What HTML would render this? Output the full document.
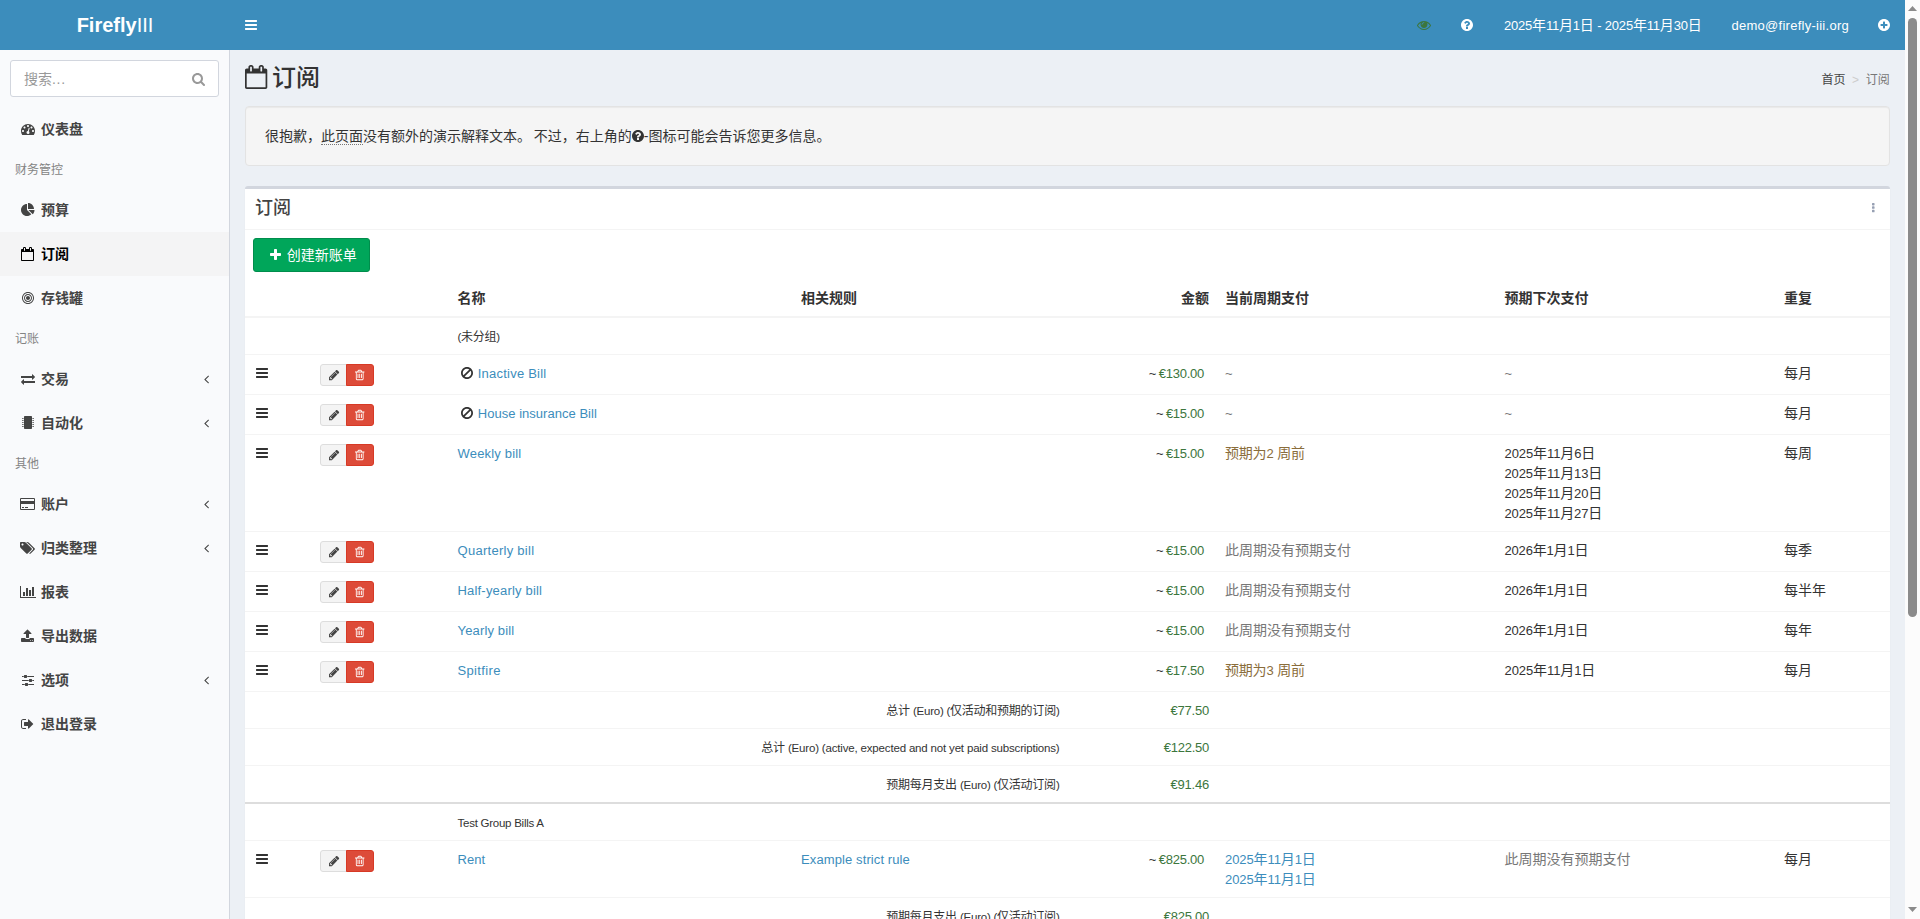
<!DOCTYPE html>
<html lang="zh-CN">
<head>
<meta charset="utf-8">
<title>订阅 » Firefly III</title>
<style>
*{box-sizing:border-box}
html,body{margin:0;padding:0}
body{width:1920px;height:919px;overflow:hidden;position:relative;background:#ecf0f5;
 font-family:"Liberation Sans","Noto Sans CJK SC",sans-serif;font-size:14px;line-height:20px;color:#333}
a{color:#3c8dbc;text-decoration:none}
.l{font-size:.93em;line-height:1}
svg.fa{display:inline-block;fill:currentColor;overflow:visible}
.fw{display:inline-block;text-align:center}
#page{position:absolute;left:0;top:0;width:1905px;height:919px;overflow:hidden;background:#ecf0f5}

/* header */
#hdr{position:absolute;left:0;top:0;width:1905px;height:50px;background:#3c8dbc;color:#fff}
#logo{position:absolute;left:0;top:0;width:230px;height:50px;line-height:50px;text-align:center;
 font-family:"Liberation Sans",sans-serif;font-size:20px;color:#fff;font-weight:300}
#logo b{font-weight:700}
#toggle{position:absolute;left:230px;top:0;padding:15px;height:50px;line-height:20px;color:#fff}
#nav{position:absolute;right:0;top:0;height:50px;margin:0;padding:0;list-style:none;display:flex}
#nav li{display:block;padding:15px;height:50px;line-height:20px;color:#fff;white-space:nowrap}

/* sidebar */
#side{position:absolute;left:0;top:50px;width:230px;height:869px;background:#f9fafc;border-right:1px solid #d2d6de}
#search{position:absolute;left:10px;top:10px;width:209px;height:37px;border:1px solid #d2d6de;border-radius:3px;background:#fff}
#search .ph{position:absolute;left:13px;top:8px;line-height:20px;color:#999}
#search .ic{position:absolute;right:13px;top:8px;color:#999;line-height:20px}
#menu{position:absolute;left:0;top:57px;width:229px;margin:0;padding:0;list-style:none}
#menu li{position:relative;display:block;margin:0}
#menu li.it{height:44px;padding:12px 5px 12px 15px;font-weight:600;color:#444;white-space:nowrap}
#menu li.it .ic{display:inline-block;width:20px;text-align:center;margin-left:2.7px}
#menu li.it{word-spacing:-.5px}
#menu li.act{background:#f4f4f5;color:#000}
#menu li.hd{height:37px;padding:11px 25px 9px 15px;font-size:12px;line-height:17px;color:#848484}
#menu .ar{position:absolute;right:20px;top:15px;line-height:14px;height:14px}

/* content */
#content{position:absolute;left:230px;top:50px;width:1675px;height:869px}
#h1{position:absolute;left:15px;top:15px;margin:0;font-size:24px;font-weight:500;line-height:26px;white-space:nowrap}
#bc{position:absolute;right:15.3px;top:22px;font-size:12px;line-height:17px;white-space:nowrap;color:#444}
#bc .sep{color:#ccc;display:inline-block;width:20.2px;text-align:center}
#bc .cur{color:#777}
#well{position:absolute;left:15px;top:56px;width:1645px;height:60px;background:#f5f5f5;border:1px solid #e3e3e3;border-radius:4px;
 box-shadow:inset 0 1px 1px rgba(0,0,0,.05);padding:19px;white-space:nowrap;word-spacing:-1.1px}
#well abbr{border-bottom:1px dotted #777;text-decoration:none}
#box{position:absolute;left:15px;top:136px;width:1645px;height:800px;background:#fff;border-top:3px solid #d2d6de;border-radius:3px;
 box-shadow:0 1px 1px rgba(0,0,0,.1)}
#boxh{height:41px;padding:10px;border-bottom:1px solid #f4f4f4;position:relative}
#boxh h3{margin:-1px 0 0;font-size:18px;font-weight:500;line-height:20px;color:#444}
#boxh .tool{position:absolute;right:15.4px;top:9.4px;color:#97a0b3;font-size:12px;line-height:20px}
#btn{position:absolute;left:8px;top:49px;height:34px;padding:6px 12px;border:1px solid #008d4c;border-radius:3px;background:#00a65a;color:#fff;white-space:nowrap}

table{position:absolute;left:0;top:91px;width:1645px;border-collapse:separate;border-spacing:0;table-layout:fixed}
th,td{padding:8px;vertical-align:top;text-align:left;line-height:20px;white-space:nowrap;overflow:visible}
th{font-weight:700;height:38px;border-bottom:2px solid #f4f4f4}
tr.r td{height:40px;border-top:1px solid #f4f4f4}
tr.t td{height:36px}
tr.s td{height:37px;border-top:1px solid #f4f4f4}
tr.sep td{border-top:2px solid #ddd;height:38px}
.ra{text-align:right}
small{font-size:12px;line-height:1}
small .l{font-size:.96em}
.am{margin-right:5px;word-spacing:-1.6px}
.g{color:#3c763d}
.w{color:#8a6d3b}
.m{color:#777}
.bg{display:inline-block;position:relative;top:1px;height:22px;vertical-align:top;white-space:nowrap;font-size:0}
.bx{display:inline-block;height:22px;font-size:12px;line-height:18px;padding:1px 5px;border:1px solid #ddd;background:#f4f4f4;color:#444;vertical-align:top}
.bx.e{border-radius:3px 0 0 3px;width:27px}
.bx.d{border-radius:0 3px 3px 0;background:#dd4b39;border-color:#d73925;color:#fff;margin-left:-1px;width:28px}

/* fake scrollbar */
#sb{position:absolute;left:1905px;top:0;width:15px;height:919px;background:#fcfcfc}
#sb .th{position:absolute;left:3px;top:18px;width:9px;height:599px;border-radius:5px;background:#8b8b8b}
#sb svg{position:absolute;left:0;width:15px;height:15px;fill:#8b8b8b}
.nm{word-spacing:-1.6px}
.nm a{word-spacing:0}
#h1{word-spacing:-1.97px}
#btn{word-spacing:-1.1px}
#nav li.sh{position:relative;left:1px}

</style>
</head>
<body>
<div id="page">

<div id="side">
  <div id="search"><span class="ph">搜索<span style="letter-spacing:.7px">...</span></span><span class="ic"><svg class="fa" viewBox="0 -1536 1664 1792" style="width:13.00px;height:14px;vertical-align:-2.00px;"><path transform="scale(1,-1)" d="M1152 704C1152 457 951 256 704 256C457 256 256 457 256 704C256 951 457 1152 704 1152C951 1152 1152 951 1152 704ZM1664 -128C1664 -94 1650 -61 1627 -38L1284 305C1365 422 1408 562 1408 704C1408 1093 1093 1408 704 1408C315 1408 0 1093 0 704C0 315 315 0 704 0C846 0 986 43 1103 124L1446 -218C1469 -242 1502 -256 1536 -256C1606 -256 1664 -198 1664 -128Z"/></svg></span></div>
  <ul id="menu">
    <li class="it"><span class="ic"><svg class="fa" viewBox="0 -1536 1792 1792" style="width:14.00px;height:14px;vertical-align:-2.00px;"><path transform="scale(1,-1)" d="M384 384C384 313 327 256 256 256C185 256 128 313 128 384C128 455 185 512 256 512C327 512 384 455 384 384ZM576 832C576 761 519 704 448 704C377 704 320 761 320 832C320 903 377 960 448 960C519 960 576 903 576 832ZM1004 351C1069 306 1103 224 1082 143C1055 41 950 -21 847 6C745 33 683 138 710 241C732 322 801 377 880 383L981 765C990 799 1025 820 1059 811C1093 802 1113 767 1105 733ZM1664 384C1664 313 1607 256 1536 256C1465 256 1408 313 1408 384C1408 455 1465 512 1536 512C1607 512 1664 455 1664 384ZM1024 1024C1024 953 967 896 896 896C825 896 768 953 768 1024C768 1095 825 1152 896 1152C967 1152 1024 1095 1024 1024ZM1472 832C1472 761 1415 704 1344 704C1273 704 1216 761 1216 832C1216 903 1273 960 1344 960C1415 960 1472 903 1472 832ZM1792 384C1792 878 1390 1280 896 1280C402 1280 0 878 0 384C0 212 49 45 141 -99C153 -117 173 -128 195 -128H1597C1619 -128 1639 -117 1651 -99C1743 46 1792 212 1792 384Z"/></svg></span> <span>仪表盘</span></li>
    <li class="hd">财务管控</li>
    <li class="it"><span class="ic"><svg class="fa" viewBox="0 -1536 1792 1792" style="width:14.00px;height:14px;vertical-align:-2.00px;"><path transform="scale(1,-1)" d="M768 646V1408C344 1408 0 1064 0 640C0 216 344 -128 768 -128C981 -128 1175 -41 1314 100ZM955 640 1500 94C1641 233 1728 427 1728 640ZM1664 768C1664 1192 1320 1536 896 1536V768H1664Z"/></svg></span> <span>预算</span></li>
    <li class="it act"><span class="ic"><svg class="fa" viewBox="0 -1536 1664 1792" style="width:13.00px;height:14px;vertical-align:-2.00px;"><path transform="scale(1,-1)" d="M128 -128V896H1536V-128ZM512 1088C512 1070 498 1056 480 1056H416C398 1056 384 1070 384 1088V1376C384 1394 398 1408 416 1408H480C498 1408 512 1394 512 1376V1088ZM1280 1088C1280 1070 1266 1056 1248 1056H1184C1166 1056 1152 1070 1152 1088V1376C1152 1394 1166 1408 1184 1408H1248C1266 1408 1280 1394 1280 1376V1088ZM1664 1152C1664 1222 1606 1280 1536 1280H1408V1376C1408 1464 1336 1536 1248 1536H1184C1096 1536 1024 1464 1024 1376V1280H640V1376C640 1464 568 1536 480 1536H416C328 1536 256 1464 256 1376V1280H128C58 1280 0 1222 0 1152V-128C0 -198 58 -256 128 -256H1536C1606 -256 1664 -198 1664 -128Z"/></svg></span> <span>订阅</span></li>
    <li class="it"><span class="ic"><svg class="fa" viewBox="0 -1536 1536 1792" style="width:12.00px;height:14px;vertical-align:-2.00px;"><path transform="scale(1,-1)" d="M1024 640C1024 781 909 896 768 896C627 896 512 781 512 640C512 499 627 384 768 384C909 384 1024 499 1024 640ZM1152 640C1152 428 980 256 768 256C556 256 384 428 384 640C384 852 556 1024 768 1024C980 1024 1152 852 1152 640ZM1280 640C1280 923 1051 1152 768 1152C485 1152 256 923 256 640C256 357 485 128 768 128C1051 128 1280 357 1280 640ZM1408 640C1408 287 1121 0 768 0C415 0 128 287 128 640C128 993 415 1280 768 1280C1121 1280 1408 993 1408 640ZM1536 640C1536 1064 1192 1408 768 1408C344 1408 0 1064 0 640C0 216 344 -128 768 -128C1192 -128 1536 216 1536 640Z"/></svg></span> <span>存钱罐</span></li>
    <li class="hd">记账</li>
    <li class="it"><span class="ic"><svg class="fa" viewBox="0 -1536 1792 1792" style="width:14.00px;height:14px;vertical-align:-2.00px;"><path transform="scale(1,-1)" d="M1792 352C1792 370 1777 384 1760 384H384V576C384 594 369 608 352 608C344 608 335 605 329 599L9 279C3 273 0 265 0 256C0 248 3 240 9 234L328 -86C335 -92 343 -96 352 -96C370 -96 384 -81 384 -64V128H1760C1777 128 1792 143 1792 160ZM1792 896C1792 904 1789 913 1783 919L1464 1238C1457 1244 1449 1248 1440 1248C1422 1248 1408 1234 1408 1216V1024H32C15 1024 0 1009 0 992V800C0 783 15 768 32 768H1408V576C1408 559 1423 544 1440 544C1448 544 1457 547 1463 553L1783 873C1789 879 1792 888 1792 896Z"/></svg></span> <span>交易</span><span class="ar"><svg class="fa" viewBox="0 -1536 640 1792" style="width:5.00px;height:14px;vertical-align:-2.00px;"><path transform="scale(1,-1)" d="M627 992C627 1001 623 1009 617 1015L567 1065C561 1071 552 1075 544 1075C536 1075 527 1071 521 1065L55 599C49 593 45 584 45 576C45 568 49 559 55 553L521 87C527 81 536 77 544 77C552 77 561 81 567 87L617 137C623 143 627 152 627 160C627 168 623 177 617 183L224 576L617 969C623 975 627 984 627 992Z"/></svg></span></li>
    <li class="it"><span class="ic"><svg class="fa" viewBox="0 -1536 1536 1792" style="width:12.00px;height:14px;vertical-align:-2.00px;"><path transform="scale(1,-1)" d="M192 256H80C71 256 64 249 64 240V224H16C7 224 0 217 0 208V176C0 167 7 160 16 160H64V144C64 135 71 128 80 128H192ZM192 512H80C71 512 64 505 64 496V480H16C7 480 0 473 0 464V432C0 423 7 416 16 416H64V400C64 391 71 384 80 384H192ZM192 768H80C71 768 64 761 64 752V736H16C7 736 0 729 0 720V688C0 679 7 672 16 672H64V656C64 647 71 640 80 640H192ZM192 1024H80C71 1024 64 1017 64 1008V992H16C7 992 0 985 0 976V944C0 935 7 928 16 928H64V912C64 903 71 896 80 896H192ZM192 1280H80C71 1280 64 1273 64 1264V1248H16C7 1248 0 1241 0 1232V1200C0 1191 7 1184 16 1184H64V1168C64 1159 71 1152 80 1152H192ZM1280 1440C1280 1493 1237 1536 1184 1536H352C299 1536 256 1493 256 1440V-32C256 -85 299 -128 352 -128H1184C1237 -128 1280 -85 1280 -32ZM1536 208C1536 217 1529 224 1520 224H1472V240C1472 249 1465 256 1456 256H1344V128H1456C1465 128 1472 135 1472 144V160H1520C1529 160 1536 167 1536 176ZM1536 464C1536 473 1529 480 1520 480H1472V496C1472 505 1465 512 1456 512H1344V384H1456C1465 384 1472 391 1472 400V416H1520C1529 416 1536 423 1536 432ZM1536 720C1536 729 1529 736 1520 736H1472V752C1472 761 1465 768 1456 768H1344V640H1456C1465 640 1472 647 1472 656V672H1520C1529 672 1536 679 1536 688ZM1536 976C1536 985 1529 992 1520 992H1472V1008C1472 1017 1465 1024 1456 1024H1344V896H1456C1465 896 1472 903 1472 912V928H1520C1529 928 1536 935 1536 944ZM1536 1232C1536 1241 1529 1248 1520 1248H1472V1264C1472 1273 1465 1280 1456 1280H1344V1152H1456C1465 1152 1472 1159 1472 1168V1184H1520C1529 1184 1536 1191 1536 1200Z"/></svg></span> <span>自动化</span><span class="ar"><svg class="fa" viewBox="0 -1536 640 1792" style="width:5.00px;height:14px;vertical-align:-2.00px;"><path transform="scale(1,-1)" d="M627 992C627 1001 623 1009 617 1015L567 1065C561 1071 552 1075 544 1075C536 1075 527 1071 521 1065L55 599C49 593 45 584 45 576C45 568 49 559 55 553L521 87C527 81 536 77 544 77C552 77 561 81 567 87L617 137C623 143 627 152 627 160C627 168 623 177 617 183L224 576L617 969C623 975 627 984 627 992Z"/></svg></span></li>
    <li class="hd">其他</li>
    <li class="it"><span class="ic"><svg class="fa" viewBox="0 -1536 1920 1792" style="width:15.00px;height:14px;vertical-align:-2.00px;"><path transform="scale(1,-1)" d="M1760 1408H160C72 1408 0 1336 0 1248V32C0 -56 72 -128 160 -128H1760C1848 -128 1920 -56 1920 32V1248C1920 1336 1848 1408 1760 1408ZM160 1280H1760C1777 1280 1792 1265 1792 1248V1024H128V1248C128 1265 143 1280 160 1280ZM1760 0H160C143 0 128 15 128 32V640H1792V32C1792 15 1777 0 1760 0ZM256 128H512V256H256ZM640 128H1024V256H640Z"/></svg></span> <span>账户</span><span class="ar"><svg class="fa" viewBox="0 -1536 640 1792" style="width:5.00px;height:14px;vertical-align:-2.00px;"><path transform="scale(1,-1)" d="M627 992C627 1001 623 1009 617 1015L567 1065C561 1071 552 1075 544 1075C536 1075 527 1071 521 1065L55 599C49 593 45 584 45 576C45 568 49 559 55 553L521 87C527 81 536 77 544 77C552 77 561 81 567 87L617 137C623 143 627 152 627 160C627 168 623 177 617 183L224 576L617 969C623 975 627 984 627 992Z"/></svg></span></li>
    <li class="it"><span class="ic"><svg class="fa" viewBox="0 -1536 1920 1792" style="width:15.00px;height:14px;vertical-align:-2.00px;"><path transform="scale(1,-1)" d="M448 1088C448 1017 391 960 320 960C249 960 192 1017 192 1088C192 1159 249 1216 320 1216C391 1216 448 1159 448 1088ZM1515 512C1515 546 1501 579 1478 603L763 1317C712 1368 615 1408 544 1408H128C58 1408 0 1350 0 1280V864C0 793 40 696 91 646L806 -70C829 -93 862 -107 896 -107C930 -107 963 -93 987 -70L1478 422C1501 445 1515 478 1515 512ZM1899 512C1899 546 1885 579 1862 603L1147 1317C1096 1368 999 1408 928 1408H704C775 1408 872 1368 923 1317L1638 603C1661 579 1675 546 1675 512C1675 478 1661 445 1638 422L1168 -48C1202 -83 1228 -107 1280 -107C1314 -107 1347 -93 1371 -70L1862 422C1885 445 1899 478 1899 512Z"/></svg></span> <span>归类整理</span><span class="ar"><svg class="fa" viewBox="0 -1536 640 1792" style="width:5.00px;height:14px;vertical-align:-2.00px;"><path transform="scale(1,-1)" d="M627 992C627 1001 623 1009 617 1015L567 1065C561 1071 552 1075 544 1075C536 1075 527 1071 521 1065L55 599C49 593 45 584 45 576C45 568 49 559 55 553L521 87C527 81 536 77 544 77C552 77 561 81 567 87L617 137C623 143 627 152 627 160C627 168 623 177 617 183L224 576L617 969C623 975 627 984 627 992Z"/></svg></span></li>
    <li class="it"><span class="ic"><svg class="fa" viewBox="0 -1536 2048 1792" style="width:16.00px;height:14px;vertical-align:-2.00px;"><path transform="scale(1,-1)" d="M640 640H384V128H640ZM1024 1152H768V128H1024ZM2048 0H128V1408H0V-128H2048ZM1408 896H1152V128H1408ZM1792 1280H1536V128H1792Z"/></svg></span> <span>报表</span></li>
    <li class="it"><span class="ic"><svg class="fa" viewBox="0 -1536 1664 1792" style="width:13.00px;height:14px;vertical-align:-2.00px;"><path transform="scale(1,-1)" d="M1280 64C1280 29 1251 0 1216 0C1181 0 1152 29 1152 64C1152 99 1181 128 1216 128C1251 128 1280 99 1280 64ZM1536 64C1536 29 1507 0 1472 0C1437 0 1408 29 1408 64C1408 99 1437 128 1472 128C1507 128 1536 99 1536 64ZM1664 288C1664 341 1621 384 1568 384H1141C1114 310 1043 256 960 256H704C621 256 550 310 523 384H96C43 384 0 341 0 288V-32C0 -85 43 -128 96 -128H1568C1621 -128 1664 -85 1664 -32ZM1339 936C1349 959 1344 987 1325 1005L877 1453C865 1466 848 1472 832 1472C816 1472 799 1466 787 1453L339 1005C320 987 315 959 325 936C335 912 358 896 384 896H640V448C640 413 669 384 704 384H960C995 384 1024 413 1024 448V896H1280C1306 896 1329 912 1339 936Z"/></svg></span> <span>导出数据</span></li>
    <li class="it"><span class="ic"><svg class="fa" viewBox="0 -1536 1536 1792" style="width:12.00px;height:14px;vertical-align:-2.00px;"><path transform="scale(1,-1)" d="M352 128H0V0H352ZM704 256H448C413 256 384 227 384 192V-64C384 -99 413 -128 448 -128H704C739 -128 768 -99 768 -64V192C768 227 739 256 704 256ZM864 640H0V512H864ZM224 1152H0V1024H224ZM1536 128H800V0H1536ZM576 1280H320C285 1280 256 1251 256 1216V960C256 925 285 896 320 896H576C611 896 640 925 640 960V1216C640 1251 611 1280 576 1280ZM1216 768H960C925 768 896 739 896 704V448C896 413 925 384 960 384H1216C1251 384 1280 413 1280 448V704C1280 739 1251 768 1216 768ZM1536 640H1312V512H1536ZM1536 1152H672V1024H1536Z"/></svg></span> <span>选项</span><span class="ar"><svg class="fa" viewBox="0 -1536 640 1792" style="width:5.00px;height:14px;vertical-align:-2.00px;"><path transform="scale(1,-1)" d="M627 992C627 1001 623 1009 617 1015L567 1065C561 1071 552 1075 544 1075C536 1075 527 1071 521 1065L55 599C49 593 45 584 45 576C45 568 49 559 55 553L521 87C527 81 536 77 544 77C552 77 561 81 567 87L617 137C623 143 627 152 627 160C627 168 623 177 617 183L224 576L617 969C623 975 627 984 627 992Z"/></svg></span></li>
    <li class="it"><span class="ic"><svg class="fa" viewBox="0 -1536 1664 1792" style="width:13.00px;height:14px;vertical-align:-2.00px;"><path transform="scale(1,-1)" d="M640 96C640 133 601 128 576 128H288C200 128 128 200 128 288V992C128 1080 200 1152 288 1152H608C653 1152 640 1220 640 1248C640 1265 625 1280 608 1280H288C129 1280 0 1151 0 992V288C0 129 129 0 288 0H608C653 0 640 68 640 96ZM1568 640C1568 657 1561 673 1549 685L1005 1229C993 1241 977 1248 960 1248C925 1248 896 1219 896 1184V896H448C413 896 384 867 384 832V448C384 413 413 384 448 384H896V96C896 61 925 32 960 32C977 32 993 39 1005 51L1549 595C1561 607 1568 623 1568 640Z"/></svg></span> <span>退出登录</span></li>
  </ul>
</div>

<div id="content">
  <h1 id="h1"><svg class="fa" viewBox="0 -1536 1664 1792" style="width:22.29px;height:24px;vertical-align:-3.43px;"><path transform="scale(1,-1)" d="M128 -128V896H1536V-128ZM512 1088C512 1070 498 1056 480 1056H416C398 1056 384 1070 384 1088V1376C384 1394 398 1408 416 1408H480C498 1408 512 1394 512 1376V1088ZM1280 1088C1280 1070 1266 1056 1248 1056H1184C1166 1056 1152 1070 1152 1088V1376C1152 1394 1166 1408 1184 1408H1248C1266 1408 1280 1394 1280 1376V1088ZM1664 1152C1664 1222 1606 1280 1536 1280H1408V1376C1408 1464 1336 1536 1248 1536H1184C1096 1536 1024 1464 1024 1376V1280H640V1376C640 1464 568 1536 480 1536H416C328 1536 256 1464 256 1376V1280H128C58 1280 0 1222 0 1152V-128C0 -198 58 -256 128 -256H1536C1606 -256 1664 -198 1664 -128Z"/></svg> 订阅</h1>
  <div id="bc"><span>首页</span><span class="sep">&gt;</span><span class="cur">订阅</span></div>
  <div id="well">很抱歉，<abbr>此页面</abbr>没有额外的演示解释文本。 不过，右上角的<svg class="fa" viewBox="0 -1536 1536 1792" style="width:12.00px;height:14px;vertical-align:-2.00px;"><path transform="scale(1,-1)" d="M896 160C896 142 882 128 864 128H672C654 128 640 142 640 160V352C640 370 654 384 672 384H864C882 384 896 370 896 352V160ZM1152 832C1152 680 1048 622 972 579C925 552 896 503 896 480C896 462 882 448 864 448H672C654 448 640 462 640 480V516C640 613 737 696 808 728C869 756 896 782 896 834C896 878 837 919 773 919C737 919 704 907 687 895C668 881 648 863 601 803C595 795 585 791 576 791C569 791 562 793 557 797L425 897C412 907 408 925 417 939C503 1082 625 1152 788 1152C960 1152 1152 1015 1152 832ZM1536 640C1536 1064 1192 1408 768 1408C344 1408 0 1064 0 640C0 216 344 -128 768 -128C1192 -128 1536 216 1536 640Z"/></svg>-图标可能会告诉您更多信息。</div>

  <div id="box">
    <div id="boxh"><h3>订阅</h3><span class="tool"><svg class="fa" viewBox="0 -1536 384 1792" style="width:2.57px;height:12px;vertical-align:-1.71px;"><path transform="scale(1,-1)" d="M384 288C384 341 341 384 288 384H96C43 384 0 341 0 288V96C0 43 43 0 96 0H288C341 0 384 43 384 96ZM384 800C384 853 341 896 288 896H96C43 896 0 853 0 800V608C0 555 43 512 96 512H288C341 512 384 555 384 608ZM384 1312C384 1365 341 1408 288 1408H96C43 1408 0 1365 0 1312V1120C0 1067 43 1024 96 1024H288C341 1024 384 1067 384 1120Z"/></svg></span></div>
    <a id="btn"><span class="fw" style="width:18.00px"><svg class="fa" viewBox="0 -1536 1408 1792" style="width:11.00px;height:14px;vertical-align:-2.00px;"><path transform="scale(1,-1)" d="M1408 800C1408 853 1365 896 1312 896H896V1312C896 1365 853 1408 800 1408H608C555 1408 512 1365 512 1312V896H96C43 896 0 853 0 800V608C0 555 43 512 96 512H512V96C512 43 555 0 608 0H800C853 0 896 43 896 96V512H1312C1365 512 1408 555 1408 608Z"/></svg></span> 创建新账单</a>
    <table>
      <colgroup><col style="width:67px"><col style="width:137.5px"><col style="width:343.5px"><col style="width:274.5px"><col style="width:149.5px"><col style="width:279.5px"><col style="width:279.5px"><col style="width:114px"></colgroup>
      <thead><tr><th></th><th></th><th>名称</th><th>相关规则</th><th class="ra">金额</th><th>当前周期支付</th><th>预期下次支付</th><th>重复</th></tr></thead>
      <tbody>
        <tr class="t"><td></td><td></td><td colspan="6"><small><span style="letter-spacing:-0.26px"><span class="l">(</span>未分组<span class="l">)</span></span></small></td></tr>
        <tr class="r"><td><span class="fw" style="width:18.00px"><svg class="fa" viewBox="0 -1536 1536 1792" style="width:12.00px;height:14px;vertical-align:-2.00px;"><path transform="scale(1,-1)" d="M1536 192C1536 227 1507 256 1472 256H64C29 256 0 227 0 192V64C0 29 29 0 64 0H1472C1507 0 1536 29 1536 64ZM1536 704C1536 739 1507 768 1472 768H64C29 768 0 739 0 704V576C0 541 29 512 64 512H1472C1507 512 1536 541 1536 576ZM1536 1216C1536 1251 1507 1280 1472 1280H64C29 1280 0 1251 0 1216V1088C0 1053 29 1024 64 1024H1472C1507 1024 1536 1053 1536 1088Z"/></svg></span></td><td><span class="bg"><span class="bx e"><span class="fw" style="width:15.43px"><svg class="fa" viewBox="0 -1536 1536 1792" style="width:10.29px;height:12px;vertical-align:-1.71px;"><path transform="scale(1,-1)" d="M363 0H256V128H128V235L219 326L454 91ZM886 928C886 922 884 916 879 911L337 369C332 364 326 362 320 362C307 362 298 371 298 384C298 390 300 396 305 401L847 943C852 948 858 950 864 950C877 950 886 941 886 928ZM832 1120 0 288V-128H416L1248 704ZM1515 1024C1515 1058 1501 1091 1478 1115L1243 1349C1219 1373 1186 1387 1152 1387C1118 1387 1085 1373 1062 1349L896 1184L1312 768L1478 934C1501 957 1515 990 1515 1024Z"/></svg></span></span><span class="bx d"><span class="fw" style="width:15.43px"><svg class="fa" viewBox="0 -1536 1408 1792" style="width:9.43px;height:12px;vertical-align:-1.71px;"><path transform="scale(1,-1)" d="M512 800C512 818 498 832 480 832H416C398 832 384 818 384 800V224C384 206 398 192 416 192H480C498 192 512 206 512 224ZM768 800C768 818 754 832 736 832H672C654 832 640 818 640 800V224C640 206 654 192 672 192H736C754 192 768 206 768 224ZM1024 800C1024 818 1010 832 992 832H928C910 832 896 818 896 800V224C896 206 910 192 928 192H992C1010 192 1024 206 1024 224ZM1152 76C1152 28 1125 0 1120 0H288C283 0 256 28 256 76V1024H1152V76ZM480 1152 529 1269C532 1273 540 1279 546 1280H863C868 1279 877 1273 880 1269L928 1152ZM1408 1120C1408 1138 1394 1152 1376 1152H1067L997 1319C977 1368 917 1408 864 1408H544C491 1408 431 1368 411 1319L341 1152H32C14 1152 0 1138 0 1120V1056C0 1038 14 1024 32 1024H128V72C128 -38 200 -128 288 -128H1120C1208 -128 1280 -34 1280 76V1024H1376C1394 1024 1408 1038 1408 1056Z"/></svg></span></span></span></td><td class="nm"><span class="fw" style="width:18.00px"><svg class="fa" viewBox="0 -1536 1536 1792" style="width:12.00px;height:14px;vertical-align:-2.00px;fill:#333;"><path transform="scale(1,-1)" d="M1312 643C1312 341 1068 96 768 96C659 96 557 129 471 185L1225 938C1280 853 1312 752 1312 643ZM313 344C257 430 224 532 224 643C224 944 468 1189 768 1189C879 1189 982 1156 1068 1098ZM1536 643C1536 1068 1192 1413 768 1413C344 1413 0 1068 0 643C0 217 344 -128 768 -128C1192 -128 1536 217 1536 643Z"/></svg></span> <a><span style="letter-spacing:0.21px"><span class="l">Inactive Bill</span></span></a></td><td></td><td class="ra"><span class="am"><span class="l">~</span> <span class="g"><span style="letter-spacing:-0.25px"><span class="l">€130.00</span></span></span></span></td><td><span class="m"><span class="l">~</span></span></td><td><span class="m"><span class="l">~</span></span></td><td>每月</td></tr>
        <tr class="r"><td><span class="fw" style="width:18.00px"><svg class="fa" viewBox="0 -1536 1536 1792" style="width:12.00px;height:14px;vertical-align:-2.00px;"><path transform="scale(1,-1)" d="M1536 192C1536 227 1507 256 1472 256H64C29 256 0 227 0 192V64C0 29 29 0 64 0H1472C1507 0 1536 29 1536 64ZM1536 704C1536 739 1507 768 1472 768H64C29 768 0 739 0 704V576C0 541 29 512 64 512H1472C1507 512 1536 541 1536 576ZM1536 1216C1536 1251 1507 1280 1472 1280H64C29 1280 0 1251 0 1216V1088C0 1053 29 1024 64 1024H1472C1507 1024 1536 1053 1536 1088Z"/></svg></span></td><td><span class="bg"><span class="bx e"><span class="fw" style="width:15.43px"><svg class="fa" viewBox="0 -1536 1536 1792" style="width:10.29px;height:12px;vertical-align:-1.71px;"><path transform="scale(1,-1)" d="M363 0H256V128H128V235L219 326L454 91ZM886 928C886 922 884 916 879 911L337 369C332 364 326 362 320 362C307 362 298 371 298 384C298 390 300 396 305 401L847 943C852 948 858 950 864 950C877 950 886 941 886 928ZM832 1120 0 288V-128H416L1248 704ZM1515 1024C1515 1058 1501 1091 1478 1115L1243 1349C1219 1373 1186 1387 1152 1387C1118 1387 1085 1373 1062 1349L896 1184L1312 768L1478 934C1501 957 1515 990 1515 1024Z"/></svg></span></span><span class="bx d"><span class="fw" style="width:15.43px"><svg class="fa" viewBox="0 -1536 1408 1792" style="width:9.43px;height:12px;vertical-align:-1.71px;"><path transform="scale(1,-1)" d="M512 800C512 818 498 832 480 832H416C398 832 384 818 384 800V224C384 206 398 192 416 192H480C498 192 512 206 512 224ZM768 800C768 818 754 832 736 832H672C654 832 640 818 640 800V224C640 206 654 192 672 192H736C754 192 768 206 768 224ZM1024 800C1024 818 1010 832 992 832H928C910 832 896 818 896 800V224C896 206 910 192 928 192H992C1010 192 1024 206 1024 224ZM1152 76C1152 28 1125 0 1120 0H288C283 0 256 28 256 76V1024H1152V76ZM480 1152 529 1269C532 1273 540 1279 546 1280H863C868 1279 877 1273 880 1269L928 1152ZM1408 1120C1408 1138 1394 1152 1376 1152H1067L997 1319C977 1368 917 1408 864 1408H544C491 1408 431 1368 411 1319L341 1152H32C14 1152 0 1138 0 1120V1056C0 1038 14 1024 32 1024H128V72C128 -38 200 -128 288 -128H1120C1208 -128 1280 -34 1280 76V1024H1376C1394 1024 1408 1038 1408 1056Z"/></svg></span></span></span></td><td class="nm"><span class="fw" style="width:18.00px"><svg class="fa" viewBox="0 -1536 1536 1792" style="width:12.00px;height:14px;vertical-align:-2.00px;fill:#333;"><path transform="scale(1,-1)" d="M1312 643C1312 341 1068 96 768 96C659 96 557 129 471 185L1225 938C1280 853 1312 752 1312 643ZM313 344C257 430 224 532 224 643C224 944 468 1189 768 1189C879 1189 982 1156 1068 1098ZM1536 643C1536 1068 1192 1413 768 1413C344 1413 0 1068 0 643C0 217 344 -128 768 -128C1192 -128 1536 217 1536 643Z"/></svg></span> <a><span style="letter-spacing:0.02px"><span class="l">House insurance Bill</span></span></a></td><td></td><td class="ra"><span class="am"><span class="l">~</span> <span class="g"><span style="letter-spacing:-0.29px"><span class="l">€15.00</span></span></span></span></td><td><span class="m"><span class="l">~</span></span></td><td><span class="m"><span class="l">~</span></span></td><td>每月</td></tr>
        <tr class="r"><td style="height:97px"><span class="fw" style="width:18.00px"><svg class="fa" viewBox="0 -1536 1536 1792" style="width:12.00px;height:14px;vertical-align:-2.00px;"><path transform="scale(1,-1)" d="M1536 192C1536 227 1507 256 1472 256H64C29 256 0 227 0 192V64C0 29 29 0 64 0H1472C1507 0 1536 29 1536 64ZM1536 704C1536 739 1507 768 1472 768H64C29 768 0 739 0 704V576C0 541 29 512 64 512H1472C1507 512 1536 541 1536 576ZM1536 1216C1536 1251 1507 1280 1472 1280H64C29 1280 0 1251 0 1216V1088C0 1053 29 1024 64 1024H1472C1507 1024 1536 1053 1536 1088Z"/></svg></span></td><td><span class="bg"><span class="bx e"><span class="fw" style="width:15.43px"><svg class="fa" viewBox="0 -1536 1536 1792" style="width:10.29px;height:12px;vertical-align:-1.71px;"><path transform="scale(1,-1)" d="M363 0H256V128H128V235L219 326L454 91ZM886 928C886 922 884 916 879 911L337 369C332 364 326 362 320 362C307 362 298 371 298 384C298 390 300 396 305 401L847 943C852 948 858 950 864 950C877 950 886 941 886 928ZM832 1120 0 288V-128H416L1248 704ZM1515 1024C1515 1058 1501 1091 1478 1115L1243 1349C1219 1373 1186 1387 1152 1387C1118 1387 1085 1373 1062 1349L896 1184L1312 768L1478 934C1501 957 1515 990 1515 1024Z"/></svg></span></span><span class="bx d"><span class="fw" style="width:15.43px"><svg class="fa" viewBox="0 -1536 1408 1792" style="width:9.43px;height:12px;vertical-align:-1.71px;"><path transform="scale(1,-1)" d="M512 800C512 818 498 832 480 832H416C398 832 384 818 384 800V224C384 206 398 192 416 192H480C498 192 512 206 512 224ZM768 800C768 818 754 832 736 832H672C654 832 640 818 640 800V224C640 206 654 192 672 192H736C754 192 768 206 768 224ZM1024 800C1024 818 1010 832 992 832H928C910 832 896 818 896 800V224C896 206 910 192 928 192H992C1010 192 1024 206 1024 224ZM1152 76C1152 28 1125 0 1120 0H288C283 0 256 28 256 76V1024H1152V76ZM480 1152 529 1269C532 1273 540 1279 546 1280H863C868 1279 877 1273 880 1269L928 1152ZM1408 1120C1408 1138 1394 1152 1376 1152H1067L997 1319C977 1368 917 1408 864 1408H544C491 1408 431 1368 411 1319L341 1152H32C14 1152 0 1138 0 1120V1056C0 1038 14 1024 32 1024H128V72C128 -38 200 -128 288 -128H1120C1208 -128 1280 -34 1280 76V1024H1376C1394 1024 1408 1038 1408 1056Z"/></svg></span></span></span></td><td class="nm"><a><span style="letter-spacing:0.18px"><span class="l">Weekly bill</span></span></a></td><td></td><td class="ra"><span class="am"><span class="l">~</span> <span class="g"><span style="letter-spacing:-0.29px"><span class="l">€15.00</span></span></span></span></td><td><span class="w"><span style="letter-spacing:-0.19px">预期为<span class="l">2</span> 周前</span></span></td><td><span style="letter-spacing:-0.10px"><span class="l">2025</span>年<span class="l">11</span>月<span class="l">6</span>日</span><br><span style="letter-spacing:-0.12px"><span class="l">2025</span>年<span class="l">11</span>月<span class="l">13</span>日</span><br><span style="letter-spacing:-0.12px"><span class="l">2025</span>年<span class="l">11</span>月<span class="l">20</span>日</span><br><span style="letter-spacing:-0.12px"><span class="l">2025</span>年<span class="l">11</span>月<span class="l">27</span>日</span></td><td>每周</td></tr>
        <tr class="r"><td><span class="fw" style="width:18.00px"><svg class="fa" viewBox="0 -1536 1536 1792" style="width:12.00px;height:14px;vertical-align:-2.00px;"><path transform="scale(1,-1)" d="M1536 192C1536 227 1507 256 1472 256H64C29 256 0 227 0 192V64C0 29 29 0 64 0H1472C1507 0 1536 29 1536 64ZM1536 704C1536 739 1507 768 1472 768H64C29 768 0 739 0 704V576C0 541 29 512 64 512H1472C1507 512 1536 541 1536 576ZM1536 1216C1536 1251 1507 1280 1472 1280H64C29 1280 0 1251 0 1216V1088C0 1053 29 1024 64 1024H1472C1507 1024 1536 1053 1536 1088Z"/></svg></span></td><td><span class="bg"><span class="bx e"><span class="fw" style="width:15.43px"><svg class="fa" viewBox="0 -1536 1536 1792" style="width:10.29px;height:12px;vertical-align:-1.71px;"><path transform="scale(1,-1)" d="M363 0H256V128H128V235L219 326L454 91ZM886 928C886 922 884 916 879 911L337 369C332 364 326 362 320 362C307 362 298 371 298 384C298 390 300 396 305 401L847 943C852 948 858 950 864 950C877 950 886 941 886 928ZM832 1120 0 288V-128H416L1248 704ZM1515 1024C1515 1058 1501 1091 1478 1115L1243 1349C1219 1373 1186 1387 1152 1387C1118 1387 1085 1373 1062 1349L896 1184L1312 768L1478 934C1501 957 1515 990 1515 1024Z"/></svg></span></span><span class="bx d"><span class="fw" style="width:15.43px"><svg class="fa" viewBox="0 -1536 1408 1792" style="width:9.43px;height:12px;vertical-align:-1.71px;"><path transform="scale(1,-1)" d="M512 800C512 818 498 832 480 832H416C398 832 384 818 384 800V224C384 206 398 192 416 192H480C498 192 512 206 512 224ZM768 800C768 818 754 832 736 832H672C654 832 640 818 640 800V224C640 206 654 192 672 192H736C754 192 768 206 768 224ZM1024 800C1024 818 1010 832 992 832H928C910 832 896 818 896 800V224C896 206 910 192 928 192H992C1010 192 1024 206 1024 224ZM1152 76C1152 28 1125 0 1120 0H288C283 0 256 28 256 76V1024H1152V76ZM480 1152 529 1269C532 1273 540 1279 546 1280H863C868 1279 877 1273 880 1269L928 1152ZM1408 1120C1408 1138 1394 1152 1376 1152H1067L997 1319C977 1368 917 1408 864 1408H544C491 1408 431 1368 411 1319L341 1152H32C14 1152 0 1138 0 1120V1056C0 1038 14 1024 32 1024H128V72C128 -38 200 -128 288 -128H1120C1208 -128 1280 -34 1280 76V1024H1376C1394 1024 1408 1038 1408 1056Z"/></svg></span></span></span></td><td class="nm"><a><span style="letter-spacing:0.27px"><span class="l">Quarterly bill</span></span></a></td><td></td><td class="ra"><span class="am"><span class="l">~</span> <span class="g"><span style="letter-spacing:-0.29px"><span class="l">€15.00</span></span></span></span></td><td><span class="m">此周期没有预期支付</span></td><td><span style="letter-spacing:-0.19px"><span class="l">2026</span>年<span class="l">1</span>月<span class="l">1</span>日</span></td><td>每季</td></tr>
        <tr class="r"><td><span class="fw" style="width:18.00px"><svg class="fa" viewBox="0 -1536 1536 1792" style="width:12.00px;height:14px;vertical-align:-2.00px;"><path transform="scale(1,-1)" d="M1536 192C1536 227 1507 256 1472 256H64C29 256 0 227 0 192V64C0 29 29 0 64 0H1472C1507 0 1536 29 1536 64ZM1536 704C1536 739 1507 768 1472 768H64C29 768 0 739 0 704V576C0 541 29 512 64 512H1472C1507 512 1536 541 1536 576ZM1536 1216C1536 1251 1507 1280 1472 1280H64C29 1280 0 1251 0 1216V1088C0 1053 29 1024 64 1024H1472C1507 1024 1536 1053 1536 1088Z"/></svg></span></td><td><span class="bg"><span class="bx e"><span class="fw" style="width:15.43px"><svg class="fa" viewBox="0 -1536 1536 1792" style="width:10.29px;height:12px;vertical-align:-1.71px;"><path transform="scale(1,-1)" d="M363 0H256V128H128V235L219 326L454 91ZM886 928C886 922 884 916 879 911L337 369C332 364 326 362 320 362C307 362 298 371 298 384C298 390 300 396 305 401L847 943C852 948 858 950 864 950C877 950 886 941 886 928ZM832 1120 0 288V-128H416L1248 704ZM1515 1024C1515 1058 1501 1091 1478 1115L1243 1349C1219 1373 1186 1387 1152 1387C1118 1387 1085 1373 1062 1349L896 1184L1312 768L1478 934C1501 957 1515 990 1515 1024Z"/></svg></span></span><span class="bx d"><span class="fw" style="width:15.43px"><svg class="fa" viewBox="0 -1536 1408 1792" style="width:9.43px;height:12px;vertical-align:-1.71px;"><path transform="scale(1,-1)" d="M512 800C512 818 498 832 480 832H416C398 832 384 818 384 800V224C384 206 398 192 416 192H480C498 192 512 206 512 224ZM768 800C768 818 754 832 736 832H672C654 832 640 818 640 800V224C640 206 654 192 672 192H736C754 192 768 206 768 224ZM1024 800C1024 818 1010 832 992 832H928C910 832 896 818 896 800V224C896 206 910 192 928 192H992C1010 192 1024 206 1024 224ZM1152 76C1152 28 1125 0 1120 0H288C283 0 256 28 256 76V1024H1152V76ZM480 1152 529 1269C532 1273 540 1279 546 1280H863C868 1279 877 1273 880 1269L928 1152ZM1408 1120C1408 1138 1394 1152 1376 1152H1067L997 1319C977 1368 917 1408 864 1408H544C491 1408 431 1368 411 1319L341 1152H32C14 1152 0 1138 0 1120V1056C0 1038 14 1024 32 1024H128V72C128 -38 200 -128 288 -128H1120C1208 -128 1280 -34 1280 76V1024H1376C1394 1024 1408 1038 1408 1056Z"/></svg></span></span></span></td><td class="nm"><a><span style="letter-spacing:0.18px"><span class="l">Half-yearly bill</span></span></a></td><td></td><td class="ra"><span class="am"><span class="l">~</span> <span class="g"><span style="letter-spacing:-0.29px"><span class="l">€15.00</span></span></span></span></td><td><span class="m">此周期没有预期支付</span></td><td><span style="letter-spacing:-0.19px"><span class="l">2026</span>年<span class="l">1</span>月<span class="l">1</span>日</span></td><td>每半年</td></tr>
        <tr class="r"><td><span class="fw" style="width:18.00px"><svg class="fa" viewBox="0 -1536 1536 1792" style="width:12.00px;height:14px;vertical-align:-2.00px;"><path transform="scale(1,-1)" d="M1536 192C1536 227 1507 256 1472 256H64C29 256 0 227 0 192V64C0 29 29 0 64 0H1472C1507 0 1536 29 1536 64ZM1536 704C1536 739 1507 768 1472 768H64C29 768 0 739 0 704V576C0 541 29 512 64 512H1472C1507 512 1536 541 1536 576ZM1536 1216C1536 1251 1507 1280 1472 1280H64C29 1280 0 1251 0 1216V1088C0 1053 29 1024 64 1024H1472C1507 1024 1536 1053 1536 1088Z"/></svg></span></td><td><span class="bg"><span class="bx e"><span class="fw" style="width:15.43px"><svg class="fa" viewBox="0 -1536 1536 1792" style="width:10.29px;height:12px;vertical-align:-1.71px;"><path transform="scale(1,-1)" d="M363 0H256V128H128V235L219 326L454 91ZM886 928C886 922 884 916 879 911L337 369C332 364 326 362 320 362C307 362 298 371 298 384C298 390 300 396 305 401L847 943C852 948 858 950 864 950C877 950 886 941 886 928ZM832 1120 0 288V-128H416L1248 704ZM1515 1024C1515 1058 1501 1091 1478 1115L1243 1349C1219 1373 1186 1387 1152 1387C1118 1387 1085 1373 1062 1349L896 1184L1312 768L1478 934C1501 957 1515 990 1515 1024Z"/></svg></span></span><span class="bx d"><span class="fw" style="width:15.43px"><svg class="fa" viewBox="0 -1536 1408 1792" style="width:9.43px;height:12px;vertical-align:-1.71px;"><path transform="scale(1,-1)" d="M512 800C512 818 498 832 480 832H416C398 832 384 818 384 800V224C384 206 398 192 416 192H480C498 192 512 206 512 224ZM768 800C768 818 754 832 736 832H672C654 832 640 818 640 800V224C640 206 654 192 672 192H736C754 192 768 206 768 224ZM1024 800C1024 818 1010 832 992 832H928C910 832 896 818 896 800V224C896 206 910 192 928 192H992C1010 192 1024 206 1024 224ZM1152 76C1152 28 1125 0 1120 0H288C283 0 256 28 256 76V1024H1152V76ZM480 1152 529 1269C532 1273 540 1279 546 1280H863C868 1279 877 1273 880 1269L928 1152ZM1408 1120C1408 1138 1394 1152 1376 1152H1067L997 1319C977 1368 917 1408 864 1408H544C491 1408 431 1368 411 1319L341 1152H32C14 1152 0 1138 0 1120V1056C0 1038 14 1024 32 1024H128V72C128 -38 200 -128 288 -128H1120C1208 -128 1280 -34 1280 76V1024H1376C1394 1024 1408 1038 1408 1056Z"/></svg></span></span></span></td><td class="nm"><a><span style="letter-spacing:0.15px"><span class="l">Yearly bill</span></span></a></td><td></td><td class="ra"><span class="am"><span class="l">~</span> <span class="g"><span style="letter-spacing:-0.29px"><span class="l">€15.00</span></span></span></span></td><td><span class="m">此周期没有预期支付</span></td><td><span style="letter-spacing:-0.19px"><span class="l">2026</span>年<span class="l">1</span>月<span class="l">1</span>日</span></td><td>每年</td></tr>
        <tr class="r"><td><span class="fw" style="width:18.00px"><svg class="fa" viewBox="0 -1536 1536 1792" style="width:12.00px;height:14px;vertical-align:-2.00px;"><path transform="scale(1,-1)" d="M1536 192C1536 227 1507 256 1472 256H64C29 256 0 227 0 192V64C0 29 29 0 64 0H1472C1507 0 1536 29 1536 64ZM1536 704C1536 739 1507 768 1472 768H64C29 768 0 739 0 704V576C0 541 29 512 64 512H1472C1507 512 1536 541 1536 576ZM1536 1216C1536 1251 1507 1280 1472 1280H64C29 1280 0 1251 0 1216V1088C0 1053 29 1024 64 1024H1472C1507 1024 1536 1053 1536 1088Z"/></svg></span></td><td><span class="bg"><span class="bx e"><span class="fw" style="width:15.43px"><svg class="fa" viewBox="0 -1536 1536 1792" style="width:10.29px;height:12px;vertical-align:-1.71px;"><path transform="scale(1,-1)" d="M363 0H256V128H128V235L219 326L454 91ZM886 928C886 922 884 916 879 911L337 369C332 364 326 362 320 362C307 362 298 371 298 384C298 390 300 396 305 401L847 943C852 948 858 950 864 950C877 950 886 941 886 928ZM832 1120 0 288V-128H416L1248 704ZM1515 1024C1515 1058 1501 1091 1478 1115L1243 1349C1219 1373 1186 1387 1152 1387C1118 1387 1085 1373 1062 1349L896 1184L1312 768L1478 934C1501 957 1515 990 1515 1024Z"/></svg></span></span><span class="bx d"><span class="fw" style="width:15.43px"><svg class="fa" viewBox="0 -1536 1408 1792" style="width:9.43px;height:12px;vertical-align:-1.71px;"><path transform="scale(1,-1)" d="M512 800C512 818 498 832 480 832H416C398 832 384 818 384 800V224C384 206 398 192 416 192H480C498 192 512 206 512 224ZM768 800C768 818 754 832 736 832H672C654 832 640 818 640 800V224C640 206 654 192 672 192H736C754 192 768 206 768 224ZM1024 800C1024 818 1010 832 992 832H928C910 832 896 818 896 800V224C896 206 910 192 928 192H992C1010 192 1024 206 1024 224ZM1152 76C1152 28 1125 0 1120 0H288C283 0 256 28 256 76V1024H1152V76ZM480 1152 529 1269C532 1273 540 1279 546 1280H863C868 1279 877 1273 880 1269L928 1152ZM1408 1120C1408 1138 1394 1152 1376 1152H1067L997 1319C977 1368 917 1408 864 1408H544C491 1408 431 1368 411 1319L341 1152H32C14 1152 0 1138 0 1120V1056C0 1038 14 1024 32 1024H128V72C128 -38 200 -128 288 -128H1120C1208 -128 1280 -34 1280 76V1024H1376C1394 1024 1408 1038 1408 1056Z"/></svg></span></span></span></td><td class="nm"><a><span style="letter-spacing:0.34px"><span class="l">Spitfire</span></span></a></td><td></td><td class="ra"><span class="am"><span class="l">~</span> <span class="g"><span style="letter-spacing:-0.29px"><span class="l">€17.50</span></span></span></span></td><td><span class="w"><span style="letter-spacing:-0.19px">预期为<span class="l">3</span> 周前</span></span></td><td><span style="letter-spacing:-0.10px"><span class="l">2025</span>年<span class="l">11</span>月<span class="l">1</span>日</span></td><td>每月</td></tr>
        <tr class="s"><td colspan="4" class="ra"><small><span style="letter-spacing:-0.24px">总计 <span class="l">(Euro) (</span>仅活动和预期的订阅<span class="l">)</span></span></small></td><td class="ra"><span class="g"><span style="letter-spacing:-0.20px"><span class="l">€77.50</span></span></span></td><td colspan="3"></td></tr>
        <tr class="s"><td colspan="4" class="ra"><small><span style="letter-spacing:-0.18px">总计 <span class="l">(Euro) (active, expected and not yet paid subscriptions)</span></span></small></td><td class="ra"><span class="g"><span style="letter-spacing:-0.25px"><span class="l">€122.50</span></span></span></td><td colspan="3"></td></tr>
        <tr class="s"><td colspan="4" class="ra"><small><span style="letter-spacing:-0.24px">预期每月支出 <span class="l">(Euro) (</span>仅活动订阅<span class="l">)</span></span></small></td><td class="ra"><span class="g"><span style="letter-spacing:-0.20px"><span class="l">€91.46</span></span></span></td><td colspan="3"></td></tr>
      </tbody>
      <tbody>
        <tr class="t sep"><td></td><td></td><td colspan="6"><small><span style="letter-spacing:-0.26px"><span class="l">Test Group Bills A</span></span></small></td></tr>
        <tr class="r"><td style="height:57px"><span class="fw" style="width:18.00px"><svg class="fa" viewBox="0 -1536 1536 1792" style="width:12.00px;height:14px;vertical-align:-2.00px;"><path transform="scale(1,-1)" d="M1536 192C1536 227 1507 256 1472 256H64C29 256 0 227 0 192V64C0 29 29 0 64 0H1472C1507 0 1536 29 1536 64ZM1536 704C1536 739 1507 768 1472 768H64C29 768 0 739 0 704V576C0 541 29 512 64 512H1472C1507 512 1536 541 1536 576ZM1536 1216C1536 1251 1507 1280 1472 1280H64C29 1280 0 1251 0 1216V1088C0 1053 29 1024 64 1024H1472C1507 1024 1536 1053 1536 1088Z"/></svg></span></td><td><span class="bg"><span class="bx e"><span class="fw" style="width:15.43px"><svg class="fa" viewBox="0 -1536 1536 1792" style="width:10.29px;height:12px;vertical-align:-1.71px;"><path transform="scale(1,-1)" d="M363 0H256V128H128V235L219 326L454 91ZM886 928C886 922 884 916 879 911L337 369C332 364 326 362 320 362C307 362 298 371 298 384C298 390 300 396 305 401L847 943C852 948 858 950 864 950C877 950 886 941 886 928ZM832 1120 0 288V-128H416L1248 704ZM1515 1024C1515 1058 1501 1091 1478 1115L1243 1349C1219 1373 1186 1387 1152 1387C1118 1387 1085 1373 1062 1349L896 1184L1312 768L1478 934C1501 957 1515 990 1515 1024Z"/></svg></span></span><span class="bx d"><span class="fw" style="width:15.43px"><svg class="fa" viewBox="0 -1536 1408 1792" style="width:9.43px;height:12px;vertical-align:-1.71px;"><path transform="scale(1,-1)" d="M512 800C512 818 498 832 480 832H416C398 832 384 818 384 800V224C384 206 398 192 416 192H480C498 192 512 206 512 224ZM768 800C768 818 754 832 736 832H672C654 832 640 818 640 800V224C640 206 654 192 672 192H736C754 192 768 206 768 224ZM1024 800C1024 818 1010 832 992 832H928C910 832 896 818 896 800V224C896 206 910 192 928 192H992C1010 192 1024 206 1024 224ZM1152 76C1152 28 1125 0 1120 0H288C283 0 256 28 256 76V1024H1152V76ZM480 1152 529 1269C532 1273 540 1279 546 1280H863C868 1279 877 1273 880 1269L928 1152ZM1408 1120C1408 1138 1394 1152 1376 1152H1067L997 1319C977 1368 917 1408 864 1408H544C491 1408 431 1368 411 1319L341 1152H32C14 1152 0 1138 0 1120V1056C0 1038 14 1024 32 1024H128V72C128 -38 200 -128 288 -128H1120C1208 -128 1280 -34 1280 76V1024H1376C1394 1024 1408 1038 1408 1056Z"/></svg></span></span></span></td><td class="nm"><a><span style="letter-spacing:0.03px"><span class="l">Rent</span></span></a></td><td><a><span style="letter-spacing:0.10px"><span class="l">Example strict rule</span></span></a></td><td class="ra"><span class="am"><span class="l">~</span> <span class="g"><span style="letter-spacing:-0.25px"><span class="l">€825.00</span></span></span></span></td><td><a><span style="letter-spacing:-0.10px"><span class="l">2025</span>年<span class="l">11</span>月<span class="l">1</span>日</span></a><br><a><span style="letter-spacing:-0.10px"><span class="l">2025</span>年<span class="l">11</span>月<span class="l">1</span>日</span></a></td><td><span class="m">此周期没有预期支付</span></td><td>每月</td></tr>
        <tr class="s"><td colspan="4" class="ra"><small><span style="letter-spacing:-0.24px">预期每月支出 <span class="l">(Euro) (</span>仅活动订阅<span class="l">)</span></span></small></td><td class="ra"><span class="g"><span style="letter-spacing:-0.25px"><span class="l">€825.00</span></span></span></td><td colspan="3"></td></tr>
      </tbody>
    </table>
  </div>
</div>

<div id="hdr">
  <div id="logo"><b>Firefly</b>III</div>
  <div id="toggle"><svg class="fa" viewBox="0 -1536 1536 1792" style="width:12.00px;height:14px;vertical-align:-2.00px;"><path transform="scale(1,-1)" d="M1536 192C1536 227 1507 256 1472 256H64C29 256 0 227 0 192V64C0 29 29 0 64 0H1472C1507 0 1536 29 1536 64ZM1536 704C1536 739 1507 768 1472 768H64C29 768 0 739 0 704V576C0 541 29 512 64 512H1472C1507 512 1536 541 1536 576ZM1536 1216C1536 1251 1507 1280 1472 1280H64C29 1280 0 1251 0 1216V1088C0 1053 29 1024 64 1024H1472C1507 1024 1536 1053 1536 1088Z"/></svg></div>
  <ul id="nav">
    <li><svg class="fa" viewBox="0 -1536 1792 1792" style="width:14.00px;height:14px;vertical-align:-2.00px;fill:#3c763d;"><path transform="scale(1,-1)" d="M1664 576C1493 312 1217 128 896 128C575 128 299 312 128 576C223 723 353 849 509 929C469 861 448 783 448 704C448 457 649 256 896 256C1143 256 1344 457 1344 704C1344 783 1323 861 1283 929C1439 849 1569 723 1664 576ZM944 960C944 934 922 912 896 912C782 912 688 818 688 704C688 678 666 656 640 656C614 656 592 678 592 704C592 871 729 1008 896 1008C922 1008 944 986 944 960ZM1792 576C1792 601 1784 624 1772 645C1588 947 1251 1152 896 1152C541 1152 204 947 20 645C8 624 0 601 0 576C0 551 8 528 20 507C204 205 541 0 896 0C1251 0 1588 204 1772 507C1784 528 1792 551 1792 576Z"/></svg></li>
    <li><svg class="fa" viewBox="0 -1536 1536 1792" style="width:12.00px;height:14px;vertical-align:-2.00px;"><path transform="scale(1,-1)" d="M896 160C896 142 882 128 864 128H672C654 128 640 142 640 160V352C640 370 654 384 672 384H864C882 384 896 370 896 352V160ZM1152 832C1152 680 1048 622 972 579C925 552 896 503 896 480C896 462 882 448 864 448H672C654 448 640 462 640 480V516C640 613 737 696 808 728C869 756 896 782 896 834C896 878 837 919 773 919C737 919 704 907 687 895C668 881 648 863 601 803C595 795 585 791 576 791C569 791 562 793 557 797L425 897C412 907 408 925 417 939C503 1082 625 1152 788 1152C960 1152 1152 1015 1152 832ZM1536 640C1536 1064 1192 1408 768 1408C344 1408 0 1064 0 640C0 216 344 -128 768 -128C1192 -128 1536 216 1536 640Z"/></svg></li>
    <li class="sh"><span style="letter-spacing:-0.21px"><span class="l">2025</span>年<span class="l">11</span>月<span class="l">1</span>日 <span class="l">- 2025</span>年<span class="l">11</span>月<span class="l">30</span>日</span></li>
    <li class="sh"><span style="letter-spacing:0.26px"><span class="l">demo@firefly-iii.org</span></span></li>
    <li><svg class="fa" viewBox="0 -1536 1536 1792" style="width:12.00px;height:14px;vertical-align:-2.00px;"><path transform="scale(1,-1)" d="M1216 576C1216 541 1187 512 1152 512H896V256C896 221 867 192 832 192H704C669 192 640 221 640 256V512H384C349 512 320 541 320 576V704C320 739 349 768 384 768H640V1024C640 1059 669 1088 704 1088H832C867 1088 896 1059 896 1024V768H1152C1187 768 1216 739 1216 704V576ZM1536 640C1536 1064 1192 1408 768 1408C344 1408 0 1064 0 640C0 216 344 -128 768 -128C1192 -128 1536 216 1536 640Z"/></svg></li>
  </ul>
</div>

</div>
<div id="sb">
  <svg viewBox="0 0 15 15" style="top:0"><path d="M3 11 L7.5 6 L12 11 Z"/></svg>
  <div class="th"></div>
  <svg viewBox="0 0 15 15" style="top:904px"><path d="M3 3 L7.5 8 L12 3 Z"/></svg>
</div>
</body>

</html>
